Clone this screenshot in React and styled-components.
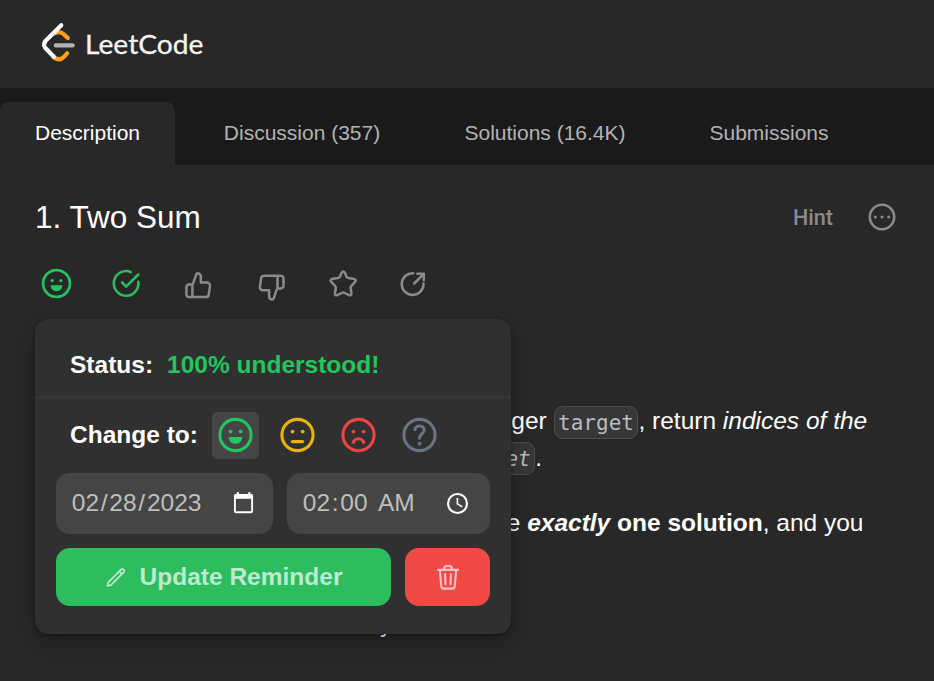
import React from "react";
import styled, { createGlobalStyle } from "styled-components";

const GlobalStyle = createGlobalStyle`
  * { box-sizing: border-box; }
  body {
    margin: 0;
    background: #282828;
    color: #fff;
    font-family: "Liberation Sans", Arial, sans-serif;
    overflow: hidden;
  }
  button { font-family: inherit; border: 0; padding: 0; margin: 0; background: none; }
  svg { display: block; overflow: visible; flex: none; }
`;

const Page = styled.div`
  width: 934px;
  height: 681px;
  overflow: hidden;
  background: #282828;
`;

const Header = styled.header`
  height: 88px;
  padding: 22px 40px 0;
  display: flex;
  align-items: flex-start;
  gap: 9px;
`;

const TabBar = styled.nav`
  height: 77px;
  padding-top: 14px;
  background: #1a1a1a;
  display: flex;
`;

const Tab = styled.button`
  height: 63px;
  width: ${(p) => p.$width}px;
  padding-bottom: 2px;
  font-size: 21px;
  line-height: 61px;
  text-align: center;
  white-space: nowrap;
  color: ${(p) => (p.$active ? "#fff" : "#b3b3b3")};
  background: ${(p) => (p.$active ? "#282828" : "transparent")};
  border-radius: 9px 9px 0 0;
`;

const Content = styled.main`
  padding: 0 35px;
`;

const TitleRow = styled.div`
  height: 101px;
  display: flex;
  align-items: center;
  padding: 3px 2px 0 0;
`;

const Title = styled.h1`
  margin: 0;
  flex: 1;
  font-size: 31.5px;
  font-weight: 400;
  line-height: 40px;
`;

const TitleActions = styled.div`
  display: flex;
  align-items: center;
  gap: 34px;
  color: #8a8a8a;
`;

const Toolbar = styled.div`
  display: grid;
  grid-template-columns: 70px 72px 73px 72px 69px 36px;
  height: 36px;
  padding-left: 3px;
  color: #8a8a8a;
`;

const Icon = styled.svg`
  width: ${(p) => p.$width || p.$size || 36}px;
  height: ${(p) => p.$size || 36}px;
  color: ${(p) => p.$color || "inherit"};
  fill: none;
  stroke: currentColor;
  stroke-width: ${(p) => p.$stroke || 2.5};
  stroke-linecap: round;
  stroke-linejoin: round;
`;

const FaceSlot = styled.span`
  padding: 2px 0 0 3px;
`;

const Anchor = styled.div`
  position: relative;
`;

const Prose = styled.article`
  padding-top: 101px;
  font-size: 24.5px;
  line-height: 36.75px;
`;

const Paragraph = styled.p`
  margin: 0 0 28px;
`;

const Code = styled.code`
  font-family: "DejaVu Sans Mono", monospace;
  font-size: 21px;
  line-height: 1;
  color: #b9bcc0;
  background: #373737;
  border: 1px solid #4b4b4b;
  border-radius: 9px;
  padding: 3.5px;
`;

const Popup = styled.section`
  position: absolute;
  z-index: 1;
  left: 0;
  top: 17px;
  width: 476px;
  height: 315px;
  background: #303030;
  border-radius: 14px;
  box-shadow: 0 2px 5px rgba(0, 0, 0, 0.3), 0 10px 28px rgba(0, 0, 0, 0.2);
`;

const StatusRow = styled.div`
  height: 80px;
  padding: 14px 35px 0;
  border-bottom: 3px solid #363636;
  display: flex;
  align-items: center;
  gap: 14px;
  font-size: 24.5px;
  font-weight: 700;
  line-height: 36px;
`;

const StatusValue = styled.span`
  color: #22c55e;
`;

const ChangeRow = styled.div`
  height: 74px;
  padding: 13px 35px 14px;
  display: flex;
`;

const ChangeLabel = styled.span`
  width: 142px;
  font-size: 24.5px;
  font-weight: 700;
  line-height: 46px;
  white-space: nowrap;
`;

const FaceOption = styled.button`
  width: 47px;
  height: 47px;
  padding: 0 0 1px 0.6px;
  margin-right: 14.4px;
  display: flex;
  align-items: center;
  justify-content: center;
  border-radius: 5px;
  background: ${(p) => (p.$selected ? "#454545" : "transparent")};
`;

const FormRow = styled.div`
  display: flex;
  gap: 14px;
  padding: 0 21px;
  margin-bottom: 14px;
`;

const Field = styled.div`
  width: ${(p) => p.$width}px;
  height: 61px;
  padding: 0 14px;
  display: flex;
  align-items: center;
  justify-content: space-between;
  background: #454545;
  border-radius: 14px;
  color: #bebebe;
  font-size: 24.5px;
`;

const FieldText = styled.span`
  height: 61px;
  line-height: 59px;
  white-space: pre;
`;

const Segment = styled.span`
  padding: 0 1.75px;
`;

const Action = styled.button`
  width: ${(p) => p.$width}px;
  height: 58px;
  display: flex;
  align-items: center;
  justify-content: center;
  gap: 12px;
  padding-right: ${(p) => (p.$danger ? 0 : 1)}px;
  border-radius: 14px;
  background: ${(p) => (p.$danger ? "#f04946" : "#2dbc5e")};
  color: ${(p) => (p.$danger ? "#f9c3c4" : "#bdead0")};
  font-size: 24.5px;
  font-weight: 700;
  line-height: 58px;
`;

const Wordmark = styled.text`
  font-family: Lato, sans-serif;
  font-size: 27.5px;
  fill: #f4f4f4;
  stroke: #f4f4f4;
  stroke-width: 0.3px;
`;

const HintText = styled.text`
  font-family: Roboto, sans-serif;
  font-size: 22.5px;
  font-weight: 500;
  fill: #8a8a8a;
`;

const mouths = {
  happy: <path d="M-6.7 1.9H6.7C6.7 6 4 8.8 0 8.8S-6.7 6-6.7 1.9Z" fill="currentColor" stroke="none" />,
  neutral: <path d="M-5.1 6.6H5.1" />,
  sad: <path d="M-5.4 8.6C-4.6 2.1 4.6 2.1 5.4 8.6" strokeLinecap="butt" strokeWidth="3.2" />,
};

function Face({ mood, color, size, width }) {
  return (
    <Icon viewBox={size ? "-18 -18 36 36" : "-17.5 -18 35 36"} $size={size || 36} $width={width} $color={color} $stroke={3.1}>
      <circle r="15.6" />
      {mood === "unknown" ? (
        <g>
          <path d="M-4.5-5.2C-4.2-10.5 4.7-10.3 4.7-4.9 4.7-1.2 0-1.2 0 3.2" />
          <circle cy="8.7" r="1.9" fill="currentColor" stroke="none" />
        </g>
      ) : (
        <g>
          <circle cx="-5" cy="-3.4" r="1.9" fill="currentColor" stroke="none" />
          <circle cx="5.1" cy="-3.4" r="1.9" fill="currentColor" stroke="none" />
          {mouths[mood]}
        </g>
      )}
    </Icon>
  );
}

const thumb =
  "M12.2 18.9H8.8a2.6 2.6 0 0 0-2.6 2.6v7.4a2.6 2.6 0 0 0 2.6 2.6h16.8a3 3 0 0 0 3-2.6l1.2-8.6a3 3 0 0 0-3-3.3h-6.2v-5.6c0-4-3.9-4.6-4.7-2.2L13 17.6c-.3.8-.4 1-.8 1.3V31.5";

const tabs = [
  ["Description", 175],
  ["Discussion (357)", 254],
  ["Solutions (16.4K)", 232],
  ["Submissions", 216],
];

const moods = [
  ["happy", "#22c55e"],
  ["neutral", "#eab308"],
  ["sad", "#ef4444"],
  ["unknown", "#6b7280"],
];

export default function App() {
  return (
    <Page>
      <GlobalStyle />
      <Header>
        <svg width="36" height="40" fill="none" strokeWidth="4.2" strokeLinecap="round">
          <path d="M15 11.2Q19.5 8.5 23.5 12L27.8 16M13.5 35Q19.5 39.8 24.2 34.6L27.2 31.2" stroke="#ffa116" />
          <path d="M15.8 23.4H32.7" stroke="#b3b3b3" />
          <path d="M21.3 3.2L5.4 19Q2.8 22.6 5.4 26L13.8 34.7" stroke="#fff" strokeLinejoin="round" />
        </svg>
        <svg width="120" height="40">
          <Wordmark x="0" y="31.5" textLength="118.5" lengthAdjust="spacingAndGlyphs">LeetCode</Wordmark>
        </svg>
      </Header>
      <TabBar>
        {tabs.map(([label, width], i) => (
          <Tab key={label} $width={width} $active={i === 0}>{label}</Tab>
        ))}
      </TabBar>
      <Content>
        <TitleRow>
          <Title>1. Two Sum</Title>
          <TitleActions>
            <svg width="41" height="30">
              <HintText x="1" y="23" textLength="40" lengthAdjust="spacingAndGlyphs">Hint</HintText>
            </svg>
            <Icon viewBox="-15 -15 30 30" $size={30} $stroke={2.6}>
              <circle r="12.2" />
              <path d="M-6.7 0h.01M0 0h.01M6.7 0h.01" strokeWidth="3.1" />
            </Icon>
          </TitleActions>
        </TitleRow>
        <Toolbar>
          <FaceSlot><Face mood="happy" color="#22c55e" size={31} /></FaceSlot>
          <Icon viewBox="-0.1 0.3 36 36" $color="#2cbb5d" $stroke={2.6}>
            <path d="M22.8 6.4A12.3 12.3 0 1 0 30.2 16.2M14 16.7L18 21 30.2 8.8" />
          </Icon>
          <Icon viewBox="-0.2 0.4 36 36"><path d={thumb} /></Icon>
          <Icon viewBox="-0.3 0.3 36 36"><path d={thumb} transform="rotate(180 18.2 20.8)" /></Icon>
          <Icon viewBox="0 0 36 36">
            <path d="M16.4 7Q18.2 4 20 7L21.3 10.2Q21.9 11.6 23.4 11.9L28.3 12.7Q32.2 13.5 29.9 16.2L26.4 19.8Q25.3 20.9 25.6 22.5L26.4 26.6Q26.8 30.4 23.6 28.9L19.7 27Q18.2 26.2 16.7 27L12.8 28.9Q9.6 30.4 10 26.6L10.8 22.5Q11.1 20.9 10 19.8L6.5 16.2Q4.2 13.5 8.1 12.7L13 11.9Q14.5 11.6 15.1 10.2Z" />
          </Icon>
          <Icon viewBox="-0.5 0 36 36">
            <path d="M18.9 7.2A10.9 10.9 0 1 0 29 17.4M19.7 17.5L29 8.2M22.8 7.7H29.3V14.2" />
          </Icon>
        </Toolbar>
        <Anchor>
          <Prose>
            <Paragraph>
              Given an array of integers <Code>nums</Code> and an integer <Code>target</Code>, return{" "}
              <em>indices of the two numbers such that they add up to <Code>target</Code></em>.
            </Paragraph>
            <Paragraph>
              You may assume that each input would have <strong><em>exactly</em> one solution</strong>, and you
              may not use the <em>same</em> element twice.
            </Paragraph>
            <Paragraph>You can return the answer in any order.</Paragraph>
          </Prose>
          <Popup>
            <StatusRow>
              <span>Status:</span>
              <StatusValue>100% understood!</StatusValue>
            </StatusRow>
            <ChangeRow>
              <ChangeLabel>Change to:</ChangeLabel>
              {moods.map(([mood, color]) => (
                <FaceOption key={mood} $selected={mood === "happy"}>
                  <Face mood={mood} color={color} width={35} />
                </FaceOption>
              ))}
            </ChangeRow>
            <FormRow>
              <Field $width={217}>
                <FieldText>
                  <Segment>02</Segment>/<Segment>28</Segment>/<Segment>2023</Segment>
                </FieldText>
                <Icon viewBox="0 0 30 30" $size={30} $stroke={1.9} $color="#fff">
                  <rect x="5.9" y="5.9" width="17.2" height="17.4" rx="1" />
                  <path d="M5.5 7.6H23.5" strokeWidth="4.4" strokeLinecap="butt" />
                  <path d="M8.9 3.2V6M20.3 3.2V6" strokeWidth="2.3" strokeLinecap="butt" />
                </Icon>
              </Field>
              <Field $width={203}>
                <FieldText>
                  <Segment>02</Segment>:<Segment>00</Segment>{" "}<Segment>AM</Segment>
                </FieldText>
                <Icon viewBox="-14.6 -14.6 30 30" $size={36} $stroke={1.75} $color="#fff">
                  <circle r="7.9" />
                  <path d="M-.1-4.5V.3L4 2.8" strokeWidth="1.4" strokeLinecap="butt" />
                </Icon>
              </Field>
            </FormRow>
            <FormRow>
              <Action $width={335}>
                <Icon viewBox="0 0 24 24" $size={24} $stroke={1.7}>
                  <path d="M3.3 20.9L4.3 17.4 17 4.6Q18.3 3.4 19.6 4.6T19.6 7.4L6.9 20.1 3.3 20.9ZM15.3 6.3L17.9 9" />
                </Icon>
                Update Reminder
              </Action>
              <Action $width={85} $danger>
                <Icon viewBox="0 0 28 28" $size={28} $stroke={2.1}>
                  <path d="M4.2 6.9H23.8M5.9 7L7.2 23.2Q7.4 25.6 9.7 25.6H18.3Q20.6 25.6 20.8 23.2L22.1 7M9.8 6.6Q10 3 12.5 3H15.5Q18 3 18.2 6.6M11.1 11L11.5 21.2M16.9 11L16.5 21.2" />
                </Icon>
              </Action>
            </FormRow>
          </Popup>
        </Anchor>
      </Content>
    </Page>
  );
}
